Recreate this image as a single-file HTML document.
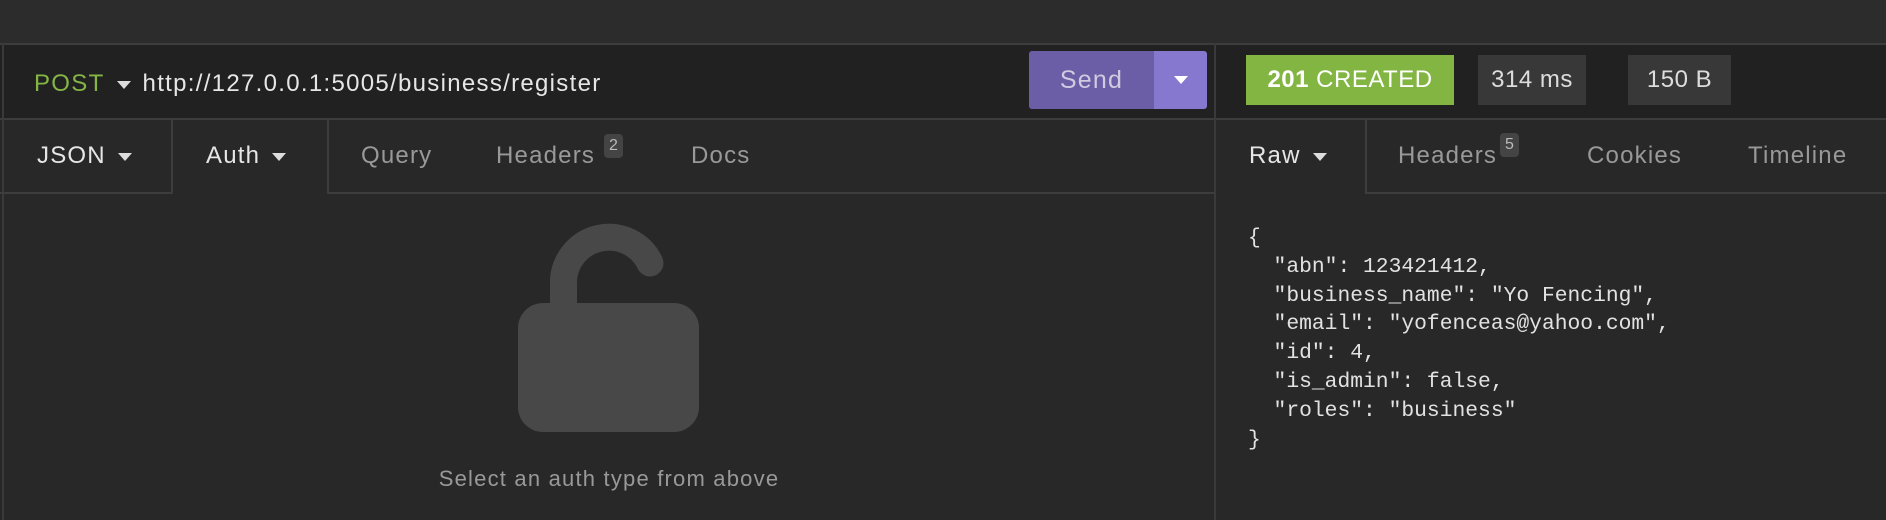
<!DOCTYPE html>
<html><head><meta charset="utf-8"><style>
*{margin:0;padding:0;box-sizing:border-box}
body{width:1886px;height:520px;background:#282828;font-family:"Liberation Sans",sans-serif;position:relative;overflow:hidden;color:#ddd;letter-spacing:1.2px}
.a{position:absolute}
.tri{display:inline-block;width:0;height:0;border-left:7px solid transparent;border-right:7px solid transparent;border-top:8px solid #ddd;vertical-align:middle;margin-left:12px}
.tab{position:absolute;top:118px;height:75px;line-height:75px;font-size:24px}
.badge{position:absolute;font-size:16px;background:#444;color:#bbb;border-radius:4px;padding:1px 5px;line-height:22px;letter-spacing:0}
</style></head><body>
<div class="a" style="left:0;top:0;width:1886px;height:43px;background:#2c2c2c"></div>
<div class="a" style="left:0;top:43px;width:1886px;height:2px;background:#3d3d3d"></div>
<div class="a" style="left:0;top:45px;width:1886px;height:73px;background:#212121"></div>
<div class="a" style="left:0;top:118px;width:1886px;height:2px;background:#3d3d3d"></div>
<div class="a" style="left:2px;top:43px;width:2px;height:477px;background:#3a3a3a"></div>
<div class="a" style="left:1214px;top:43px;width:2px;height:477px;background:#3a3a3a"></div>
<div class="a" style="left:34px;top:69px;font-size:24px;line-height:30px;letter-spacing:1.3px"><span style="color:#84b545">POST</span><span class="tri" style="margin:0 12px 0 12px"></span><span style="color:#e6e6e6">http://127.0.0.1:5005/business/register</span></div>
<div class="a" style="left:1029px;top:51px;width:178px;height:58px;border-radius:3px;overflow:hidden">
 <div class="a" style="left:0;top:0;width:125px;height:58px;background:#6b5ea6;color:#cfcce0;font-size:25px;line-height:58px;text-align:center">Send</div>
 <div class="a" style="left:125px;top:0;width:53px;height:58px;background:#8678cf;text-align:center;line-height:58px"><span class="tri" style="margin:0;border-top-color:#fff"></span></div>
</div>
<div class="a" style="left:1246px;top:55px;width:208px;height:50px;background:#82b542;color:#fff;font-size:24px;line-height:50px;text-align:center;letter-spacing:0.5px"><b>201</b> CREATED</div>
<div class="a" style="left:1478px;top:55px;width:108px;height:50px;background:#383838;color:#ddd;font-size:24px;line-height:50px;text-align:center;letter-spacing:0.5px">314 ms</div>
<div class="a" style="left:1628px;top:55px;width:103px;height:50px;background:#383838;color:#ddd;font-size:24px;line-height:50px;text-align:center;letter-spacing:0.5px">150 B</div>
<div class="a" style="left:0;top:192px;width:172px;height:2px;background:#3d3d3d"></div>
<div class="a" style="left:171px;top:118px;width:2px;height:76px;background:#3d3d3d"></div>
<div class="a" style="left:327px;top:118px;width:2px;height:76px;background:#3d3d3d"></div>
<div class="a" style="left:328px;top:192px;width:886px;height:2px;background:#3d3d3d"></div>
<div class="tab" style="left:37px;color:#e6e6e6">JSON<span class="tri"></span></div>
<div class="tab" style="left:206px;color:#e6e6e6">Auth<span class="tri"></span></div>
<div class="tab" style="left:361px;color:#999">Query</div>
<div class="tab" style="left:496px;color:#999">Headers</div>
<div class="badge" style="left:604px;top:134px">2</div>
<div class="tab" style="left:691px;color:#999">Docs</div>
<div class="a" style="left:1365px;top:118px;width:2px;height:76px;background:#3d3d3d"></div>
<div class="a" style="left:1366px;top:192px;width:520px;height:2px;background:#3d3d3d"></div>
<div class="tab" style="left:1249px;color:#e6e6e6">Raw<span class="tri"></span></div>
<div class="tab" style="left:1398px;color:#999">Headers</div>
<div class="badge" style="left:1500px;top:133px">5</div>
<div class="tab" style="left:1587px;color:#999">Cookies</div>
<div class="tab" style="left:1748px;color:#999">Timeline</div>
<svg class="a" style="left:480px;top:200px" width="260" height="260" viewBox="480 200 260 260">
 <rect x="518" y="303" width="181" height="129" rx="25" fill="#484848"/>
 <path d="M563.5 305 V284 A45.5 45.5 0 0 1 650 263" fill="none" stroke="#484848" stroke-width="27" stroke-linecap="round"/>
 <rect x="550" y="290" width="27" height="15" fill="#484848"/>
</svg>
<div class="a" style="left:259px;top:466px;width:700px;text-align:center;font-size:22px;color:#999">Select an auth type from above</div>
<pre class="a" style="left:1248px;top:224px;font-family:'Liberation Mono',monospace;font-size:21.3px;line-height:28.8px;color:#e2e2e2;letter-spacing:0">{
  "abn": 123421412,
  "business_name": "Yo Fencing",
  "email": "yofenceas@yahoo.com",
  "id": 4,
  "is_admin": false,
  "roles": "business"
}</pre>
</body></html>
